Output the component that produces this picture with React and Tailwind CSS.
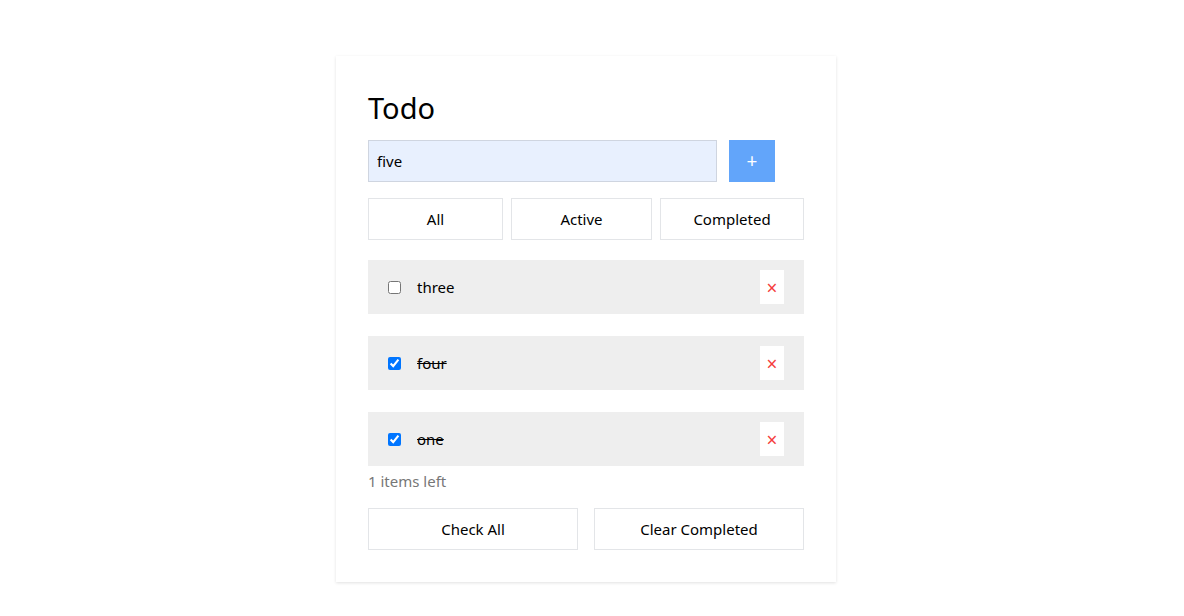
import { useState } from "react";

const font = { fontFamily: '"Segoe UI", "Noto Sans", "Open Sans", sans-serif' };

const TodoItem = ({ todo, onToggle, onRemove }) => (
  <li className="flex h-[54px] items-center bg-[#eeeeee] px-5">
    <input
      type="checkbox"
      checked={todo.done}
      onChange={onToggle}
      className="m-0 h-[13px] w-[13px] accent-[#0075ff]"
    />
    <span className={`ml-4 flex-1 text-[15px] text-black ${todo.done ? "line-through" : ""}`}>
      {todo.text}
    </span>
    <button
      onClick={onRemove}
      className="flex h-[34px] w-6 items-center justify-center bg-white pt-[3px] text-[19px] leading-none text-[#f53d3d]"
    >
      ×
    </button>
  </li>
);

const App = () => {
  const [value, setValue] = useState("five");
  const [todos, setTodos] = useState([
    { id: 3, text: "three", done: false },
    { id: 4, text: "four", done: true },
    { id: 1, text: "one", done: true },
  ]);

  const left = todos.filter((t) => !t.done).length;

  return (
    <div className="min-h-screen bg-white pt-14 pr-3" style={font}>
      <div className="mx-auto w-[500px] bg-white p-8 shadow-[0_1px_3px_rgba(0,0,0,0.12)]">
        <h1 className="h-10 text-[29px] leading-10 text-black">Todo</h1>

        {/* New todo */}
        <div className="mt-3 flex gap-3">
          <input
            value={value}
            onChange={(e) => setValue(e.target.value)}
            className="h-[42px] w-[349px] border border-[#cfd5e0] bg-[#e8f0fe] px-2 text-[15px] text-black outline-none"
          />
          <button className="flex h-[42px] w-[46px] items-center justify-center bg-[#62a5fa] text-[19px] text-white">
            +
          </button>
        </div>

        {/* Filters */}
        <div className="mt-4 flex gap-2">
          <button className="h-[42px] w-[135px] border border-[#e3e5e8] text-[15px] text-black">All</button>
          <button className="h-[42px] w-[141px] border border-[#e3e5e8] text-[15px] text-black">Active</button>
          <button className="h-[42px] w-[144px] border border-[#e3e5e8] text-[15px] text-black">Completed</button>
        </div>

        <ul className="mt-5 flex flex-col gap-[22px]">
          {todos.map((todo) => (
            <TodoItem
              key={todo.id}
              todo={todo}
              onToggle={() =>
                setTodos(todos.map((t) => (t.id === todo.id ? { ...t, done: !t.done } : t)))
              }
              onRemove={() => setTodos(todos.filter((t) => t.id !== todo.id))}
            />
          ))}
        </ul>

        <p className="mt-[3px] h-6 text-[15px] leading-6 text-[#777777]">{left} items left</p>

        <div className="mt-[15px] flex gap-4">
          <button className="h-[42px] flex-1 border border-[#e3e5e8] text-[15px] text-black">Check All</button>
          <button className="h-[42px] flex-1 border border-[#e3e5e8] text-[15px] text-black">Clear Completed</button>
        </div>
      </div>
    </div>
  );
};

export default App;
